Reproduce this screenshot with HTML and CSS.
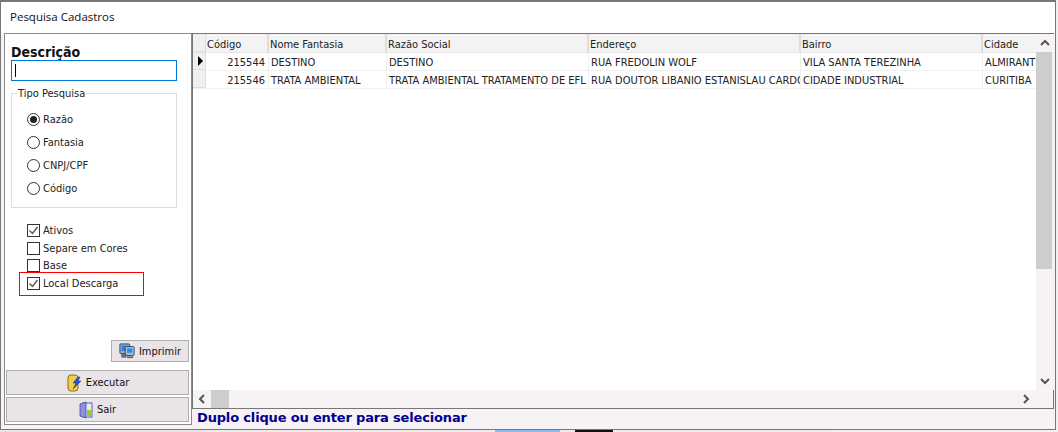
FILE: index.html
```html
<!DOCTYPE html>
<html lang="pt">
<head>
<meta charset="utf-8">
<title>Pesquisa Cadastros</title>
<link rel="stylesheet" href="styles.css">
</head>
<body>
<div class="window">
  <div class="titlebar">Pesquisa Cadastros</div>
  <div class="client">
    <aside class="side">
      <label class="desc-label">Descrição</label>
      <div class="desc-input"><span class="caret"></span></div>
      <fieldset class="group">
        <legend>Tipo Pesquisa</legend>
        <div class="radio-row"><span class="radio on"></span>Razão</div>
        <div class="radio-row"><span class="radio"></span>Fantasia</div>
        <div class="radio-row"><span class="radio"></span>CNPJ/CPF</div>
        <div class="radio-row"><span class="radio"></span>Código</div>
      </fieldset>
      <div class="checks">
        <div class="check-row"><span class="check"><svg viewBox="0 0 11 11" width="11" height="11"><path d="M1.5 5.5 4.5 8.5 9.5 2" fill="none" stroke="#555" stroke-width="1.4"/></svg></span>Ativos</div>
        <div class="check-row"><span class="check"></span>Separe em Cores</div>
        <div class="check-row"><span class="check"></span>Base</div>
        <div class="check-row marked"><span class="check"><svg viewBox="0 0 11 11" width="11" height="11"><path d="M1.5 5.5 4.5 8.5 9.5 2" fill="none" stroke="#555" stroke-width="1.4"/></svg></span>Local Descarga</div>
      </div>
      <div class="actions">
        <button class="btn btn-small">
          <svg viewBox="0 0 18 18" width="16" height="16"><rect x="1" y="1" width="11" height="11" rx="1" fill="#8fa9c9" stroke="#2f4359"/><rect x="3" y="3" width="7" height="6" fill="#2f7fd8"/><rect x="7" y="4" width="10" height="10" rx="1" fill="#a7c1de" stroke="#2f4359"/><rect x="9" y="6" width="6" height="5" fill="#2d8ee6"/><path d="M3 13h5v3H3z" fill="#777" stroke="#333" stroke-width=".6"/><path d="M9 15h7v2H9z" fill="#666"/></svg>
          Imprimir</button>
        <button class="btn btn-wide">
          <svg viewBox="0 0 16 18" width="16" height="18"><rect x="2" y="1" width="10" height="16" rx="3" fill="#f2cf4a" stroke="#8a6d12"/><path d="M12 3 7 9h3l-3 6 8-8h-3l2-4z" fill="#2a55d6" stroke="#12308a" stroke-width=".5"/></svg>
          Executar</button>
        <button class="btn btn-wide">
          <svg viewBox="0 0 14 18" width="14" height="18"><rect x="4" y="2" width="9" height="14" fill="#e8edf2" stroke="#5a5fb5"/><rect x="8" y="9" width="4" height="6" fill="#8ecb3f"/><path d="M1 3 7 1v16l-6-2z" fill="#8f8fe0" stroke="#46469c" stroke-width=".8"/></svg>
          Sair</button>
      </div>
    </aside>
    <div class="main">
      <div class="grid-box">
        <div class="grid-area">
          <div class="table">
            <div class="row head">
              <div class="ind"></div><div class="c c1">Código</div><div class="c c2">Nome Fantasia</div><div class="c c3">Razão Social</div><div class="c c4">Endereço</div><div class="c c5">Bairro</div><div class="c c6">Cidade</div>
            </div>
            <div class="row">
              <div class="ind"><span class="arrow"></span></div><div class="c c1 num">215544</div><div class="c c2">DESTINO</div><div class="c c3">DESTINO</div><div class="c c4">RUA FREDOLIN WOLF</div><div class="c c5">VILA SANTA TEREZINHA</div><div class="c c6">ALMIRANTE</div>
            </div>
            <div class="row">
              <div class="ind"></div><div class="c c1 num">215546</div><div class="c c2">TRATA AMBIENTAL</div><div class="c c3">TRATA AMBIENTAL TRATAMENTO DE EFL</div><div class="c c4">RUA DOUTOR LIBANIO ESTANISLAU CARDOSO</div><div class="c c5">CIDADE INDUSTRIAL</div><div class="c c6">CURITIBA</div>
            </div>
          </div>
          <div class="vscroll">
            <svg class="sb-btn" viewBox="0 0 18 18" width="18" height="18"><path d="M5 11 9 7l4 4" fill="none" stroke="#555" stroke-width="2"/></svg>
            <div class="vthumb"></div>
            <div class="sb-fill"></div>
            <svg class="sb-btn" viewBox="0 0 18 18" width="18" height="18"><path d="M5 7l4 4 4-4" fill="none" stroke="#555" stroke-width="2"/></svg>
          </div>
        </div>
        <div class="hscroll">
          <svg class="sb-btn" viewBox="0 0 18 18" width="18" height="18"><path d="M11 5 7 9l4 4" fill="none" stroke="#555" stroke-width="2"/></svg>
          <div class="hthumb"></div>
          <div class="sb-fill"></div>
          <svg class="sb-btn" viewBox="0 0 18 18" width="18" height="18"><path d="M7 5l4 4-4 4" fill="none" stroke="#555" stroke-width="2"/></svg>
        </div>
      </div>
      <div class="status">Duplo clique ou enter para selecionar</div>
    </div>
  </div>
</div>
<div class="behind">
  <span class="b b1"></span><span class="b b2"></span><span class="b b3"></span><span class="b b4"></span><span class="b b5"></span><span class="b b6"></span>
</div>
</body>
</html>
```
FILE: styles.css
```css
* { box-sizing: border-box; }
html, body { margin: 0; padding: 0; }
body {
  width: 1058px; height: 432px; overflow: hidden; background: #f0f0f0;
  font: 11px "DejaVu Sans Condensed", "DejaVu Sans", sans-serif; font-stretch: condensed; color: #111;
}
.window {
  width: 1056px; height: 430px;
  background: #f6f2f6;
  border: 1px solid #777; border-top-width: 2px; border-bottom-width: 1px;
  display: flex; flex-direction: column;
}
.titlebar {
  height: 31px; background: #fff; padding: 8px 0 0 9px;
  font: 11.5px/14px "Open Sans", sans-serif; color: #111; flex: none;
}
.client { flex: 1; display: flex; padding-left: 3px; min-height: 0; }
.side {
  width: 188px; height: 392px; background: #fff;
  border: 1px solid #8a8a8a;
  display: flex; flex-direction: column; padding: 11px 0 0 6px;
  flex: none;
}
.desc-label { font-weight: bold; font-size: 14px; line-height: 15px; height: 15px; color: #111; }
.desc-input {
  width: 166px; height: 21px; border: 1px solid #0078d7; background: #fff;
  padding: 3px 0 0 3px; flex: none;
}
.caret { display: block; width: 1px; height: 13px; background: #000; }
.group {
  width: 166px; height: 121px; margin: 6px 0 0 0; padding: 9px 0 0 15px;
  border: 1px solid #ddd; flex: none; min-width: 0;
}
.group legend { padding: 1px 1px 0; margin-left: -10px; line-height: 12px; font-size: 11px; color: #222; height: 12px; }
.radio-row { height: 23px; display: flex; align-items: center; gap: 3px; color: #222; }
.radio {
  width: 13px; height: 13px; border: 1px solid #333; border-radius: 50%; flex: none; background: #fff;
  display: flex; align-items: center; justify-content: center;
}
.radio.on::after { content: ""; width: 7px; height: 7px; border-radius: 50%; background: #222; }
.checks { margin: 14px 0 0 8px; display: flex; flex-direction: column; }
.check-row { height: 17.5px; display: flex; align-items: center; gap: 3px; padding-left: 8px; width: 124px; color: #222; }
.check {
  width: 13px; height: 13px; border: 1px solid #333; background: #fff; flex: none;
  display: flex; align-items: center; justify-content: center;
}
.check-row.marked { height: 24px; border: 1px solid #f00; padding-left: 7px; margin: -3px 0 0 0; width: 125px; }
.actions { margin-top: auto; padding: 0 2px 2px 0; display: flex; flex-direction: column; align-items: flex-end; gap: 2px; }
.btn {
  display: flex; align-items: center; justify-content: center; gap: 4px;
  background: #e8e4e8; border: 1px solid #adadad; font: inherit; color: #111; padding: 0;
}
.btn-small { width: 78px; height: 22px; margin-bottom: 6px; }
.btn-wide { width: 183px; height: 25px; }
.main { flex: 1; display: flex; flex-direction: column; min-width: 0; padding-right: 1px; }
.grid-box {
  height: 376px; border: 1px solid #777; background: #f6f2f6;
  display: flex; flex-direction: column; flex: none;
}
.grid-area { flex: 1; display: flex; min-height: 0; }
.table { width: 843px; background: #fff; overflow: hidden; flex: none; }
.row { display: flex; height: 18px; border-bottom: 1px solid #f0f0f0; }
.row.head { height: 19px; background: #f3f3f3; border-bottom-color: #e6e6e6; }
.ind {
  width: 13px; flex: none; background: #f0f0f0; border-right: 1px solid #ddd; border-bottom: 1px solid #ddd;
  display: flex; align-items: center; justify-content: center;
}
.arrow { width: 0; height: 0; border-left: 5px solid #000; border-top: 5px solid transparent; border-bottom: 5px solid transparent; margin-left: 2px; }
.c {
  flex: none; overflow: hidden; white-space: nowrap; padding-left: 2px; line-height: 20px;
  border-right: 1px solid #f0f0f0; color: #222;
}
.head .c { border-right: 2px solid #ddd; color: #222; line-height: 22px; padding-left: 1px; }
.c1 { width: 63px; }
.c2 { width: 118px; }
.c3 { width: 202px; }
.c4 { width: 212px; }
.c5 { width: 182px; }
.c6 { width: 53px; border-right: 0 !important; }
.num { text-align: right; padding-right: 3px; }
.vscroll { flex: 1; display: flex; flex-direction: column; background: #f6f2f6; }
.sb-btn { display: block; flex: none; }
.vthumb { height: 217px; background: #cdcdcd; flex: none; width: 16px; }
.sb-fill { flex: 1; }
.hscroll { height: 18px; display: flex; flex: none; background: #f6f2f6; padding-right: 18px; }
.hthumb { width: 18px; background: #cdcdcd; flex: none; }
.status {
  height: 19px; padding: 1px 0 0 5px; font: bold 13px/16px "DejaVu Sans", Verdana, sans-serif; font-stretch: normal; letter-spacing: -0.16px; color: #00008b; flex: none;
}
.behind { height: 2px; display: flex; background: #f0f0f0; }
.b { display: block; height: 2px; }
.b1 { width: 205px; background: #e8e4e8; }
.b2 { width: 290px; background: #ececec; }
.b3 { width: 65px; background: #8fbcf0; }
.b4 { width: 15px; background: #ececec; }
.b5 { width: 38px; background: #111; }
.b6 { width: 217px; background: #ececec; }
```
